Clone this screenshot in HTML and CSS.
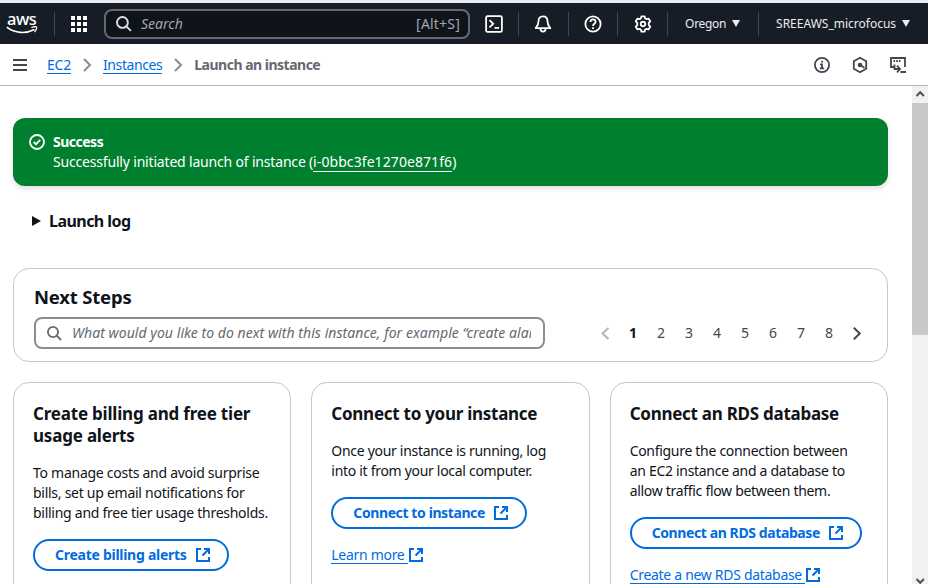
FILE: index.html
```html
<!DOCTYPE html>
<html lang="en">
<head>
<meta charset="utf-8">
<title>Launch an instance | EC2</title>
<link rel="stylesheet" href="styles.css">
</head>
<body>
<svg class="defs" width="0" height="0" aria-hidden="true">
  <symbol id="search" viewBox="0 0 16 16"><g fill="none" stroke="currentColor" stroke-width="1.800"><circle cx="7" cy="7" r="5.100"/><path d="M10.700 10.700 15 15"/></g></symbol>
  <symbol id="external" viewBox="0 0 16 16"><g fill="none" stroke="currentColor" stroke-width="2"><path d="M6 2H2v12h12v-4"/><path d="M9 2h5v5M14 2 7.500 8.500"/></g></symbol>
  <symbol id="chevron" viewBox="0 0 16 16"><path d="m5 2 6 6-6 6" fill="none" stroke="currentColor" stroke-width="2"/></symbol>
</svg>
<header class="topnav">
  <div class="logo"><span>aws</span><svg width="32" height="9" viewBox="0 0 32 9"><path d="M.8 1.200C9 7.600 20 8 28.500 3.600" fill="none" stroke="#fff" stroke-width="1.700"/><path d="M25.300 1.500c3-1 5-.9 5.200-.4.300.9-.4 3.200-2 5" fill="none" stroke="#fff" stroke-width="1.300"/></svg></div>
  <i class="sep sep-logo"></i>
  <svg class="grid-icon" width="16" height="16" viewBox="0 0 16 16"><path fill="#fff" d="M0 0h4v4H0zM6 0h4v4H6zM12 0h4v4h-4zM0 6h4v4H0zM6 6h4v4H6zM12 6h4v4h-4zM0 12h4v4H0zM6 12h4v4H6zM12 12h4v4h-4z"/></svg>
  <div class="top-search"><svg width="17" height="17"><use href="#search"/></svg><em>Search</em><span>[Alt+S]</span></div>
  <div class="tool tool-shell"><svg width="18" height="18" viewBox="0 0 16 16"><g fill="none" stroke="#fff" stroke-width="1.600"><rect x="1" y="1" width="14" height="14" rx="1.300"/><path d="m4 4.500 3.300 3.300L4 11.100M8.500 11.500h4"/></g></svg></div>
  <div class="tool"><svg width="18" height="18" viewBox="0 0 16 16"><g fill="none" stroke="#fff" stroke-width="1.600" stroke-linejoin="round"><path d="M8 1.200c-2.500 0-4 1.700-4 4.300 0 3-1 4-2.500 6.200h13C13 9.500 12 8.500 12 5.500c0-2.600-1.500-4.300-4-4.300z"/><path d="M5.700 12c0 1.800.8 2.800 2.300 2.800s2.300-1 2.300-2.800"/></g></svg></div>
  <div class="tool"><svg width="18" height="18" viewBox="0 0 16 16"><g fill="none" stroke="#fff" stroke-width="1.600"><circle cx="8" cy="8" r="6.800"/><path d="M5.700 6.300C5.700 3.200 10.400 3.300 10.300 6c0 1.800-2.300 1.700-2.300 3.700"/><path d="M8 10.800v1.700"/></g></svg></div>
  <div class="tool"><svg width="18" height="18" viewBox="0 0 16 16"><g fill="none" stroke="#fff" stroke-width="1.600" stroke-linejoin="round"><path d="M6.600 1.200h2.800l.5 1.900 1.100.6 1.900-.5 1.600 2.500L13.100 7v2l1.400 1.300-1.600 2.500-1.900-.5-1.100.6-.5 1.900H6.600l-.5-1.900-1.100-.6-1.900.5-1.600-2.500L2.900 9V7L1.500 5.700l1.600-2.500 1.900.5 1.100-.6z"/><circle cx="8" cy="8" r="2"/></g></svg></div>
  <div class="menu region"><span>Oregon</span><i></i></div>
  <div class="menu account"><span>SREEAWS_microfocus</span><i></i></div>
</header>
<nav class="crumbs">
  <i class="burger"></i>
  <a class="c-ec2">EC2</a><svg width="16" height="16"><use href="#chevron"/></svg>
  <a class="c-inst">Instances</a><svg width="16" height="16"><use href="#chevron"/></svg>
  <b>Launch an instance</b>
  <div class="panel-icons">
    <svg width="18" height="18" viewBox="0 0 18 18"><g fill="none" stroke="#424650" stroke-width="1.800"><circle cx="9" cy="9" r="7.100"/><path d="M7 8.300h2v4.200M6.800 12.300h4.400M9 4.800v1.800"/></g></svg>
    <svg width="18" height="18" viewBox="0 0 18 18"><path d="m9 1.700 6.200 3.600v7.400L9 16.300l-6.200-3.600V5.300z" fill="none" stroke="#424650" stroke-width="1.800"/><circle cx="9" cy="9" r="2.300" fill="#424650"/><path d="m9 9 4.500 2.700" stroke="#424650" stroke-width="1.800"/></svg>
    <svg width="18" height="18" viewBox="0 0 18 18"><g fill="none" stroke="#424650" stroke-width="1.800"><path d="M5 11H2V2h14v9"/><path d="M4.500 5h1.600M7.200 5h1.600M9.900 5h1.600"/><path d="M5.500 8.500V13H10M8 9.600l3 3.400-3 3.400M11.500 16H17"/></g></svg>
  </div>
</nav>
<div class="body">
  <main>
    <section class="alert">
      <svg width="16" height="16" viewBox="0 0 16 16"><g fill="none" stroke="#fff" stroke-width="1.800"><circle cx="8" cy="8" r="7"/><path d="m4.700 8 2.300 2.200 4.200-4.300"/></g></svg>
      <div><strong>Success</strong><p><span>Successfully initiated launch of instance (</span><a>i-0bbc3fe1270e871f6</a>)</p></div>
    </section>
    <div class="log"><i></i>Launch log</div>
    <section class="next">
      <h2>Next Steps</h2>
      <div class="next-row">
        <div class="filter"><svg width="16" height="16"><use href="#search"/></svg><em>What would you like to do next with this instance, for example “create alarm”</em></div>
        <div class="pages"><svg class="prev" width="28" height="15" viewBox="0 0 28 15"><path d="m17.500 1.900-6 5.600 6 5.600" fill="none" stroke="currentColor" stroke-width="2"/></svg><b>1</b><span>2</span><span>3</span><span>4</span><span>5</span><span>6</span><span>7</span><span>8</span><svg width="28" height="15" viewBox="0 0 28 15"><path d="m10.800 1.700 6 5.800-6 5.800" fill="none" stroke="currentColor" stroke-width="2"/></svg></div>
      </div>
    </section>
    <div class="cards">
      <article>
        <h3 class="t1">Create billing and free tier<br>usage alerts</h3>
        <p class="p1">To manage costs and avoid surprise<br>bills, set up email notifications for<br>billing and free tier usage thresholds.</p>
        <a class="btn b1">Create billing alerts<svg width="16" height="16"><use href="#external"/></svg></a>
      </article>
      <article>
        <h3>Connect to your instance</h3>
        <p>Once your instance is running, log<br>into it from your local computer.</p>
        <a class="btn">Connect to instance<svg width="16" height="16"><use href="#external"/></svg></a>
        <div class="more"><a>Learn more </a><svg width="16" height="16"><use href="#external"/></svg></div>
      </article>
      <article>
        <h3>Connect an RDS database</h3>
        <p>Configure the connection between<br>an EC2 instance and a database to<br>allow traffic flow between them.</p>
        <a class="btn">Connect an RDS database<svg width="16" height="16"><use href="#external"/></svg></a>
        <div class="more"><a>Create a new RDS database </a><svg width="16" height="16"><use href="#external"/></svg></div>
      </article>
    </div>
  </main>
  <aside class="scroll"><svg width="16" height="17" viewBox="0 0 16 17"><path d="m4.500 10 3.700-3.800 3.700 3.800" fill="none" stroke="#505050" stroke-width="2"/></svg><i></i><svg class="down" width="16" height="17" viewBox="0 0 16 17"><path d="m4.500 12 3.700 3.800 3.700-3.800" fill="none" stroke="#505050" stroke-width="2"/></svg></aside>
</div>
</body>
</html>
```
FILE: styles.css
```css
* { box-sizing: border-box; }
body {
  margin: 0;
  height: 584px;
  overflow: hidden;
  display: flex;
  flex-direction: column;
  background: #fff;
  color: #0f141a;
  font: 14px/20px "Noto Sans", sans-serif;
  letter-spacing: -0.3px;
  white-space: nowrap;
}
p, h2, h3 { margin: 0; }
svg { display: block; flex: none; }
.defs { position: absolute; }

/* top navigation */
.topnav {
  flex: none;
  height: 44px;
  border-top: 3px solid #e9ebf3;
  background: #161d26;
  display: flex;
  align-items: center;
  color: #ebebf0;
}
.logo { width: 34px; margin-left: 6px; height: 25px; }
.logo span { display: block; height: 15px; font: 500 16.500px/16px "Noto Sans", sans-serif; letter-spacing: -0.5px; color: #fff; padding-left: 1px; }
.sep { width: 1px; height: 24px; background: #424650; }
.sep-logo { margin-left: 14px; }
.grid-icon { margin-left: 16px; }
.top-search {
  margin-left: 17px;
  width: 366px;
  height: 30px;
  border: 2px solid #656871;
  border-radius: 8px;
  background: #0f141a;
  display: flex;
  align-items: center;
  padding: 0 8px 0 9px;
  color: #a4a4ad;
  letter-spacing: 0;
}
.top-search svg { color: #dedee3; }
.top-search em { margin-left: 9px; }
.top-search span { margin-left: auto; letter-spacing: 0.2px; }
.tool { width: 49.700px; height: 24px; border-right: 1px solid #424650; display: flex; align-items: center; justify-content: center; }
.tool-shell { width: 49px; }
.menu { display: flex; align-items: center; font-size: 12px; }
.menu i { border: 4.500px solid transparent; border-top: 7px solid #ebebf0; border-bottom: 0; }
.region { width: 91px; height: 24px; padding-left: 17px; border-right: 1px solid #424650; }
.region i { margin-left: 6px; }
.account { padding-left: 17px; letter-spacing: 0; }
.account i { margin-left: 6px; }

/* breadcrumbs */
.crumbs {
  flex: none;
  height: 42px;
  border-bottom: 1px solid #b4b4bb;
  display: flex;
  align-items: center;
  padding: 0 21px 0 13px;
}
.burger { width: 14px; height: 12px; border-top: 2px solid #424650; border-bottom: 2px solid #424650; background: linear-gradient(#424650, #424650) 0 3px / 14px 2px no-repeat; }
.crumbs a { color: #006ce0; border-bottom: 1px solid #006ce0; line-height: 17px; margin-top: 1px; }
.crumbs svg { color: #8c8c94; }
.crumbs .panel-icons svg { color: #424650; }
.c-ec2 { margin-left: 20px; letter-spacing: -0.2px; }
.c-ec2 + svg, .c-inst + svg { margin: 0 8px; }
.c-inst { letter-spacing: -0.42px; }
.crumbs b { color: #656871; letter-spacing: -0.5px; }
.panel-icons { margin-left: auto; display: flex; gap: 20px; }

/* page body */
.body { flex: 1; min-height: 0; display: flex; overflow: hidden; }
main { flex: 1; min-width: 0; padding: 32px 24px 0 13px; }
.alert {
  height: 68px;
  border-radius: 12px;
  background: #00802f;
  color: #fff;
  box-shadow: 0 3px 5px rgba(0, 7, 22, 0.12);
  display: flex;
  padding: 14px 16px;
}
.alert > svg { margin-top: 2px; }
.alert > div { margin-left: 8px; }
.alert strong { display: block; letter-spacing: -0.5px; }
.alert p span { letter-spacing: -0.18px; }
.alert a { border-bottom: 1px solid #fff; letter-spacing: 0.08px; }
.log { height: 20px; margin-top: 25px; padding-left: 19px; display: flex; align-items: center; font-size: 16px; font-weight: 700; letter-spacing: -0.55px; }
.log i { border: 5px solid transparent; border-left: 9px solid #0f141a; border-right: 0; margin-right: 8px; }
.next { margin-top: 37px; height: 94px; border: 1px solid #c6c6cd; border-radius: 16px; padding: 16px 16px 0 20px; }
.next h2 { font-size: 18.500px; line-height: 24px; letter-spacing: -0.2px; }
.next-row { display: flex; align-items: center; margin-top: 8px; }
.filter { width: 511px; height: 32px; border: 2px solid #8c8c94; border-radius: 8px; padding: 0 12px 0 10px; display: flex; align-items: center; color: #656871; }
.filter em { margin-left: 10px; overflow: hidden; letter-spacing: 0.05px; }
.pages { display: flex; align-items: center; margin-left: 46px; color: #424650; }
.pages b, .pages span, .pages svg { width: 28px; text-align: center; letter-spacing: 0; }
.pages b { color: #0f141a; }
.pages .prev { color: #b4b4bb; }

/* suggestion cards */
.cards { display: grid; grid-template-columns: repeat(3, 1fr); gap: 20px; margin-top: 20px; }
article { height: 260px; border: 1px solid #c6c6cd; border-radius: 16px; padding: 20px 19px; }
article h3 { font-size: 17px; line-height: 22px; letter-spacing: -0.27px; }
article .t1 { letter-spacing: -0.2px; }
article p { margin-top: 16px; }
article .p1 { letter-spacing: -0.27px; }
.btn {
  display: inline-flex;
  align-items: center;
  margin-top: 16px;
  height: 32px;
  border: 2px solid #006ce0;
  border-radius: 16px;
  padding: 0 16px 0 20px;
  color: #006ce0;
  font-weight: 700;
  letter-spacing: -0.4px;
}
.b1 { letter-spacing: -0.27px; }
.btn svg { margin-left: 8px; }
.more { display: flex; align-items: center; color: #006ce0; margin-top: 17px; }
.more a { border-bottom: 1px solid #006ce0; line-height: 17px; white-space: pre; }

/* scrollbar */
.scroll { flex: none; width: 16px; background: #f1f1f1; display: flex; flex-direction: column; }
.scroll i { height: 232px; background: #c8c8c8; }
.scroll .down { margin-top: auto; }
```
